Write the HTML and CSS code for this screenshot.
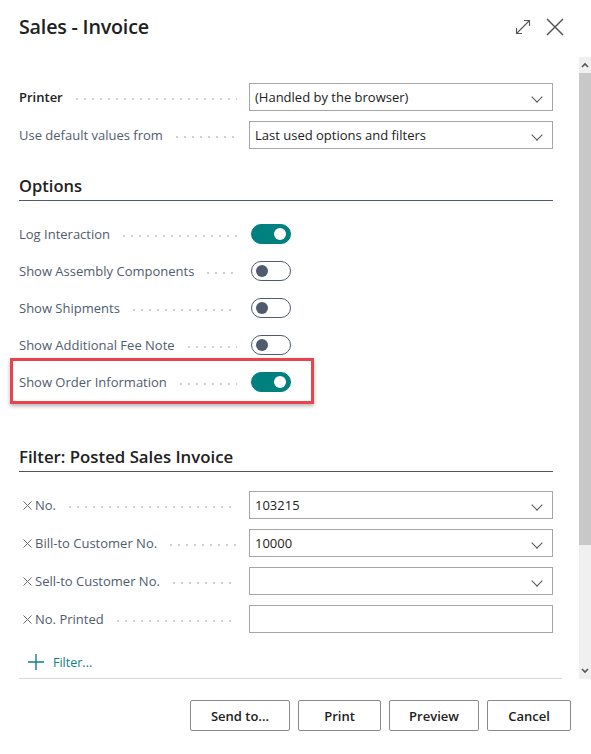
FILE: index.html
```html
<!DOCTYPE html>
<html lang="en">
<head>
  <meta charset="UTF-8">
  <meta name="viewport" content="width=device-width, initial-scale=1.0">
  <title>Sales - Invoice</title>
  <link rel="stylesheet" href="styles.css">
</head>
<body>

  <div class="dialog">
    <div class="title-bar">
      <h1>Sales - Invoice</h1>
      <div class="title-icons">
        <svg class="icon-expand" width="16" height="16" viewBox="0 0 16 16">
          <path d="M1.5 14.5 L14.5 1.5 M9 1.5 H14.5 V7 M1.5 9 V14.5 H7" fill="none" stroke="#555" stroke-width="1.1"/>
        </svg>
        <svg class="icon-close" width="18" height="18" viewBox="0 0 18 18">
          <path d="M1 1 L17 17 M17 1 L1 17" fill="none" stroke="#555" stroke-width="1.5"/>
        </svg>
      </div>
    </div>

    <div class="scroll-area">
      <div class="content">

        <div class="field first">
          <label class="field-label strong">Printer<span class="dots"></span></label>
          <div class="select">(Handled by the browser)<span class="chevron"></span></div>
        </div>
        <div class="field">
          <label class="field-label">Use default values from<span class="dots"></span></label>
          <div class="select">Last used options and filters<span class="chevron"></span></div>
        </div>

        <h2 class="section-title options">Options</h2>

        <div class="toggles">
          <div class="toggle-row">
            <label class="field-label">Log Interaction<span class="dots"></span></label>
            <span class="toggle on"></span>
          </div>
          <div class="toggle-row">
            <label class="field-label">Show Assembly Components<span class="dots"></span></label>
            <span class="toggle"></span>
          </div>
          <div class="toggle-row">
            <label class="field-label">Show Shipments<span class="dots"></span></label>
            <span class="toggle"></span>
          </div>
          <div class="toggle-row">
            <label class="field-label">Show Additional Fee Note<span class="dots"></span></label>
            <span class="toggle"></span>
          </div>
          <div class="toggle-row highlight">
            <label class="field-label">Show Order Information<span class="dots"></span></label>
            <span class="toggle on"></span>
          </div>
        </div>

        <h2 class="section-title filter">Filter: Posted Sales Invoice</h2>

        <div class="filters">
          <div class="field">
            <label class="field-label"><svg class="remove" width="9" height="9" viewBox="0 0 9 9"><path d="M0.5 0.5 L8.5 8.5 M8.5 0.5 L0.5 8.5" stroke="#6b6b6b" stroke-width="1"/></svg>No.<span class="dots"></span></label>
            <div class="select value">103215<span class="chevron"></span></div>
          </div>
          <div class="field">
            <label class="field-label"><svg class="remove" width="9" height="9" viewBox="0 0 9 9"><path d="M0.5 0.5 L8.5 8.5 M8.5 0.5 L0.5 8.5" stroke="#6b6b6b" stroke-width="1"/></svg>Bill-to Customer No.<span class="dots"></span></label>
            <div class="select value">10000<span class="chevron"></span></div>
          </div>
          <div class="field">
            <label class="field-label"><svg class="remove" width="9" height="9" viewBox="0 0 9 9"><path d="M0.5 0.5 L8.5 8.5 M8.5 0.5 L0.5 8.5" stroke="#6b6b6b" stroke-width="1"/></svg>Sell-to Customer No.<span class="dots"></span></label>
            <div class="select value"><span class="chevron"></span></div>
          </div>
          <div class="field">
            <label class="field-label"><svg class="remove" width="9" height="9" viewBox="0 0 9 9"><path d="M0.5 0.5 L8.5 8.5 M8.5 0.5 L0.5 8.5" stroke="#6b6b6b" stroke-width="1"/></svg>No. Printed<span class="dots"></span></label>
            <div class="select value"></div>
          </div>
        </div>

        <div class="add-filter">
          <svg width="16" height="16" viewBox="0 0 16 16">
            <path d="M8 0 V16 M0 8 H16" fill="none" stroke="#0f7f83" stroke-width="1.4"/>
          </svg>
          <span>Filter...</span>
        </div>
      </div>

      <div class="scrollbar">
        <div class="scroll-btn">
          <svg width="8" height="6" viewBox="0 0 8 6"><path d="M1 5 L4 2 L7 5" fill="none" stroke="#555" stroke-width="1.6"/></svg>
        </div>
        <div class="thumb"></div>
        <div class="track"></div>
        <div class="scroll-btn">
          <svg width="8" height="6" viewBox="0 0 8 6"><path d="M1 1 L4 4 L7 1" fill="none" stroke="#555" stroke-width="1.6"/></svg>
        </div>
      </div>
    </div>

    <div class="actions">
      <button class="btn send">Send to...</button>
      <button class="btn print">Print</button>
      <button class="btn preview">Preview</button>
      <button class="btn cancel">Cancel</button>
    </div>
  </div>

</body>
</html>
```

FILE: styles.css
```css
body {
  margin: 0;
  font-family: "Open Sans", "Noto Sans", sans-serif;
  background-color: #fff;
  color: #212121;
}

.dialog {
  width: 591px;
  height: 754px;
  background-color: #fff;
}

.title-bar {
  display: flex;
  align-items: center;
  justify-content: space-between;
  height: 57px;
  padding: 0 27px 0 19px;
  box-sizing: border-box;
}

h1 {
  margin: 0;
  font-size: 19.7px;
  font-weight: 600;
  letter-spacing: -0.2px;
  color: #212121;
  padding-bottom: 4px;
}

.title-icons {
  display: flex;
  align-items: center;
  gap: 15px;
  padding-bottom: 4px;
}

.scroll-area {
  display: flex;
  height: 622px;
}

.content {
  flex: 1;
  padding: 0 26px 0 19px;
  overflow: hidden;
}

.content::after {
  content: "";
  display: block;
  border-bottom: 1px solid #d6d6d6;
  margin: 6px -9px 0 0;
}

.field {
  display: flex;
  align-items: center;
  height: 28px;
  margin-bottom: 10px;
}

.field.first {
  margin-top: 26px;
}

.field-label {
  display: flex;
  align-items: center;
  width: 230px;
  flex-shrink: 0;
  font-size: 13px;
  color: #505c6d;
  white-space: nowrap;
}

.field-label.strong {
  font-weight: 600;
  color: #212121;
}

.dots {
  flex: 1;
  height: 4px;
  margin: 4px 12px 0 10px;
  background-image: radial-gradient(circle, #cfcfcf 0.8px, transparent 1.2px);
  background-size: 8px 4px;
  background-repeat: repeat-x;
}

.select {
  position: relative;
  flex: 1;
  height: 28px;
  box-sizing: border-box;
  border: 1px solid #a6a6a6;
  padding: 0 30px 0 5px;
  font-size: 13px;
  line-height: 26px;
  color: #212121;
}

.chevron {
  position: absolute;
  right: 11px;
  top: 9px;
  width: 7px;
  height: 7px;
  border-right: 1px solid #555;
  border-bottom: 1px solid #555;
  transform: rotate(45deg);
}

.section-title {
  margin: 0;
  font-size: 16.5px;
  font-weight: 600;
  line-height: 22px;
  padding-bottom: 3px;
  border-bottom: 1px solid #505c6d;
  color: #212121;
}

.section-title.options {
  margin-top: 26px;
}

.section-title.filter {
  margin-top: 46px;
  font-size: 16.8px;
  border-bottom-color: #555;
}

.toggles {
  margin-top: 14px;
}

.toggle-row {
  display: flex;
  align-items: center;
  height: 37px;
}

.toggle {
  position: relative;
  display: block;
  width: 40px;
  height: 20px;
  margin-left: 2px;
  box-sizing: border-box;
  border: 1px solid #505c6d;
  border-radius: 10px;
}

.toggle::after {
  content: "";
  position: absolute;
  top: 3px;
  left: 4px;
  width: 12px;
  height: 12px;
  border-radius: 50%;
  background-color: #505c6d;
}

.toggle.on {
  background-color: #00807f;
  border-color: #00807f;
}

.toggle.on::after {
  left: auto;
  right: 4px;
  background-color: #fff;
}

.highlight {
  position: relative;
}

.highlight::after {
  content: "";
  position: absolute;
  top: -5px;
  bottom: -4px;
  left: -9px;
  width: 304px;
  border: 3px solid #e9434b;
  box-sizing: border-box;
  box-shadow: 0 2px 4px rgba(0, 0, 0, 0.3);
}

.filters {
  margin-top: 19px;
}

.remove {
  flex-shrink: 0;
  margin: 0 3px 0 4px;
}

.add-filter {
  display: flex;
  align-items: center;
  gap: 9px;
  height: 20px;
  margin: 19px 0 0 9px;
  font-size: 12.5px;
  color: #0f7f83;
}

.scrollbar {
  display: flex;
  flex-direction: column;
  width: 12px;
  background-color: #f0f0f0;
}

.scroll-btn {
  display: flex;
  align-items: center;
  justify-content: center;
  height: 16px;
}

.thumb {
  height: 472px;
  background-color: #c8c8c8;
}

.track {
  flex: 1;
}

.actions {
  display: flex;
  justify-content: flex-end;
  gap: 8px;
  padding: 21px 20px 0 0;
}

.btn {
  height: 31px;
  background-color: #fff;
  border: 1px solid #8a8a8a;
  border-radius: 2px;
  font-family: "Open Sans", "Noto Sans", sans-serif;
  font-size: 13px;
  font-weight: 600;
  color: #212121;
}

.btn.send { width: 100px; }
.btn.print { width: 83px; }
.btn.preview { width: 90px; }
.btn.cancel { width: 84px; }
```
